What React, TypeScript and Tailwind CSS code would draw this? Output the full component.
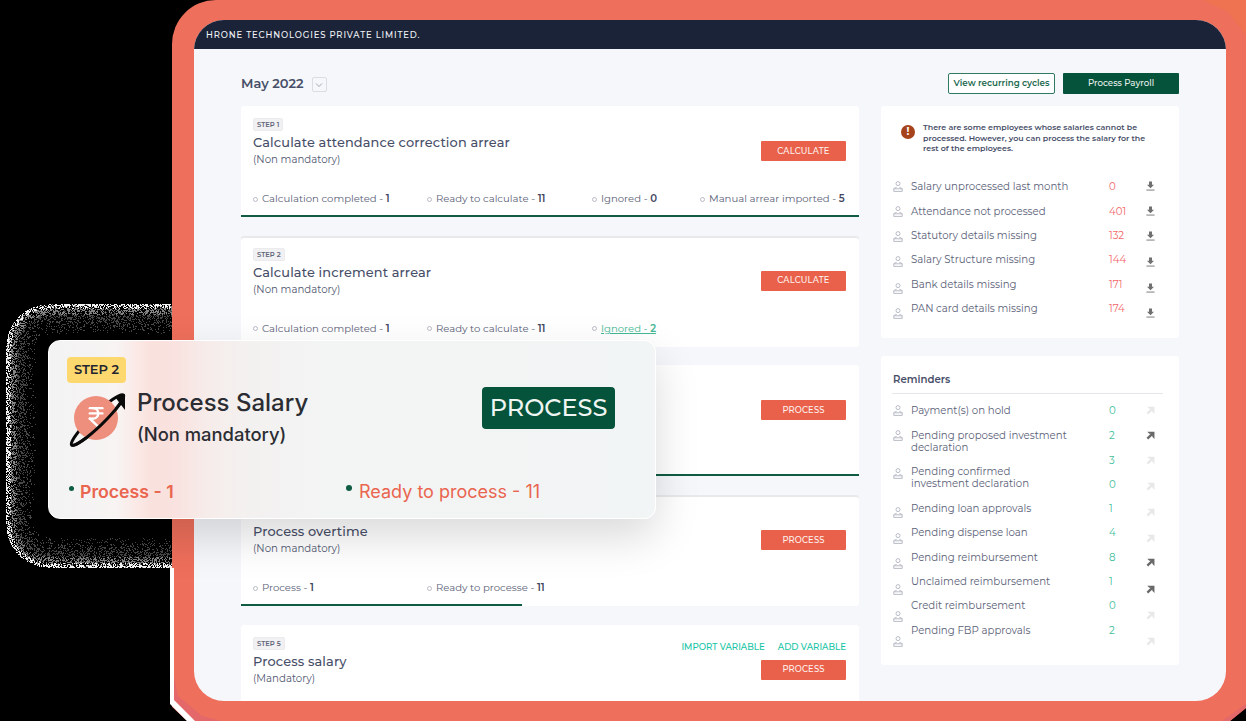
import React, { useMemo } from "react";

const MONT = "font-['Montserrat','Inter','Noto_Sans',sans-serif]";

function Person() {
  return (
    <svg width="10" height="11" viewBox="0 0 10 11" fill="none" stroke="#b0b3c0" strokeWidth="0.9" className="shrink-0">
      <circle cx="5" cy="2.6" r="2" />
      <path d="M0.8 7.8h8.4v2.6H0.8z" strokeLinejoin="round" />
      <path d="M0.8 7.8c.8-1.1 2-1.3 2.8-1.4M9.2 7.8c-.8-1.1-2-1.3-2.8-1.4" />
    </svg>
  );
}

function Download() {
  return (
    <svg width="9" height="10" viewBox="0 0 9 10" fill="#707070">
      <path d="M3 0.5h3v3.2h2L4.5 7.3 1 3.7h2z" />
      <rect x="0.4" y="8.6" width="8.2" height="0.9" />
    </svg>
  );
}

function Arrow({ on }: { on: boolean }) {
  return (
    <svg width="9" height="9" viewBox="0 0 10 10" fill={on ? "#686868" : "#e8e8e8"}>
      <path d="M1.4 0.8h8v8L7 6.4V4.9L2.4 9.4 0.6 7.6l4.6-4.5H3.7z" />
    </svg>
  );
}

function Stat({ text, n, className }: { text: string; n: string; className: string }) {
  return (
    <div className={`flex items-center gap-[4px] ${className}`}>
      <span className="w-[5px] h-[5px] rounded-full border border-[#b9bcc6] shrink-0" />
      <span className="whitespace-nowrap">
        {text} - <b className="font-semibold text-[#3f465f]">{n}</b>
      </span>
    </div>
  );
}

function Card({
  step,
  title,
  sub,
  btn,
  stats,
  bar,
  extra,
  topBorder,
}: {
  step?: string;
  title?: string;
  sub?: string;
  btn: string;
  stats?: React.ReactNode;
  bar?: string;
  extra?: boolean;
  topBorder?: boolean;
}) {
  return (
    <div className={`relative bg-white rounded-[3px] h-[111px] shrink-0 pl-[12px] pr-[13px] pt-[12px] ${topBorder ? "shadow-[inset_0_2px_0_#e9e9ec]" : ""}`}>
      <div className="flex justify-between">
        <div className="flex flex-col">
          <div className="h-[13px] flex">
            {step && (
              <span className="px-[3px] bg-[#f1f1f3] border border-[#ebebed] rounded-[2px] text-[6.8px] leading-[11px] font-semibold text-[#5f6478]">
                {step}
              </span>
            )}
          </div>
          {title && <div className="mt-[4px] text-[12.9px] leading-[16px] font-medium text-[#474e68] tracking-[0.01em]">{title}</div>}
          {sub && <div className="mt-[2px] text-[10.2px] leading-[14px] text-[#515771]">{sub}</div>}
        </div>
        <div className="flex flex-col items-end">
          {extra ? (
            <div className="flex gap-[13px] mt-[4px] mb-[7px] text-[8.7px] leading-[12px] font-medium text-[#13c4a3]">
              <span>IMPORT VARIABLE</span>
              <span>ADD VARIABLE</span>
            </div>
          ) : (
            <div className="h-[23px]" />
          )}
          <div className="w-[85px] h-[20px] bg-[#e9614a] rounded-[1px] flex items-center justify-center text-[8.4px] font-medium text-[#fdf3f0] tracking-[0.02em]">
            {btn}
          </div>
        </div>
      </div>
      {stats}
      {bar && <div className={`absolute left-0 bottom-0 h-[2px] bg-[#0f5c43] ${bar}`} />}
    </div>
  );
}

const ROW = "absolute top-[86px] text-[10.1px] leading-[14px] text-[#5b6178]";

function Halo() {
  const paths = useMemo(() => {
    let s = 20220517;
    const rnd = () => {
      s = (s * 1664525 + 1013904223) >>> 0;
      return s / 4294967296;
    };
    const X0 = 6, Y0 = 304, Y1 = 568, R = 42;
    const hard: string[] = [];
    const mid: string[] = [];
    const low: string[] = [];
    for (let y = Y0; y < Y1; y++) {
      for (let x = X0; x < 172; x++) {
        const qx = Math.max(X0 + R - x, 0);
        const qy = Math.max(Y0 + R - y, y > Y1 - R - 1 ? y - (Y1 - R - 1) : 0);
        let d: number;
        if (qx > 0 && qy > 0) d = R - Math.hypot(qx, qy);
        else d = Math.min(x - X0, y - Y0, Y1 - 1 - y);
        if (d < 0) continue;
        const p = `M${x} ${y}h1v1h-1z`;
        const r = rnd();
        if (d < 5 && r < 0.66 - d * 0.09) hard.push(p);
        else if (d < 11 && r < 0.7 - d * 0.04) mid.push(p);
        else if (d < 30 && r < 0.66 - d * 0.021) low.push(p);
      }
    }
    return [hard.join(""), mid.join(""), low.join("")];
  }, []);
  return (
    <svg width="172" height="721" viewBox="0 0 172 721" className="absolute left-0 top-0">
      <path d={paths[2]} fill="#484848" />
      <path d={paths[1]} fill="#858585" />
      <path d={paths[0]} fill="#f5f5f5" />
    </svg>
  );
}

const DETAILS: [string, string, number, number][] = [
  ["Salary unprocessed last month", "0", 186, 186],
  ["Attendance not processed", "401", 211, 211],
  ["Statutory details missing", "132", 236.5, 236],
  ["Salary Structure missing", "144", 261.5, 261.5],
  ["Bank details missing", "171", 288, 287.5],
  ["PAN card details missing", "174", 313, 312.5],
];

const REM_TEXT: [string, number][] = [
  ["Payment(s) on hold", 410],
  ["Pending proposed investment declaration", 441],
  ["Pending confirmed investment declaration", 477],
  ["Pending loan approvals", 508],
  ["Pending dispense loan", 532],
  ["Pending reimbursement", 556.5],
  ["Unclaimed reimbursement", 581],
  ["Credit reimbursement", 605],
  ["Pending FBP approvals", 630],
];
const REM_PERSON = [410, 435, 473, 512, 538, 563, 589, 616, 641];
const REM_NUM: [string, number][] = [
  ["0", 410], ["2", 435], ["3", 459.5], ["0", 483.5], ["1", 508],
  ["4", 532], ["8", 556.5], ["1", 581], ["0", 605], ["2", 630],
];
const REM_ARROW = [410, 435.5, 460.5, 486.5, 512, 538, 562.5, 589, 615, 641.5];

export default function App() {
  return (
    <div className={`relative w-[1246px] h-[721px] overflow-hidden bg-black ${MONT}`}>
      <Halo />
      {/* coral frame */}
      <div className="absolute left-[172px] top-0 right-0 h-[721px] bg-[#ee6f5b] rounded-tl-[44px] pl-[22px] pr-[20px] pt-[20px] pb-[20px]">
        <div className="h-full rounded-[30px] overflow-hidden bg-[#f5f7fb] flex flex-col">
          <div className="h-[29px] shrink-0 bg-[#1b2339] pl-[12px] pt-[1px] flex items-center text-[8.5px] font-medium tracking-[0.1em] text-[#f2f3f6]">
            HRONE TECHNOLOGIES PRIVATE LIMITED.
          </div>
          <div className="flex gap-[22px] pl-[47px] pr-[47px] pt-[24px] overflow-hidden flex-1">
            {/* left column */}
            <div className="w-[618px] shrink-0 flex flex-col">
              <div className="h-[33px] shrink-0 flex items-start">
                <span className="text-[13px] leading-[20px] font-semibold text-[#474e68]">May 2022</span>
                <span className="ml-[8px] mt-[4px] w-[15px] h-[15px] border border-[#dcdde2] rounded-[2px] flex items-center justify-center">
                  <svg width="8" height="8" viewBox="0 0 8 8" fill="none" stroke="#8c90a0" strokeWidth="0.8">
                    <path d="M1 2.5l3 3 3-3" />
                  </svg>
                </span>
              </div>
              <div className="flex flex-col gap-[18.7px]">
                <Card
                  step="STEP 1"
                  title="Calculate attendance correction arrear"
                  sub="(Non mandatory)"
                  btn="CALCULATE"
                  bar="w-full"
                  stats={
                    <>
                      <Stat className={`${ROW} left-[12px]`} text="Calculation completed" n="1" />
                      <Stat className={`${ROW} left-[186px]`} text="Ready to calculate" n="11" />
                      <Stat className={`${ROW} left-[351px]`} text="Ignored" n="0" />
                      <Stat className={`${ROW} left-[459px]`} text="Manual arrear imported" n="5" />
                    </>
                  }
                />
                <Card
                  topBorder
                  step="STEP 2"
                  title="Calculate increment arrear"
                  sub="(Non mandatory)"
                  btn="CALCULATE"
                  stats={
                    <>
                      <Stat className={`${ROW} left-[12px]`} text="Calculation completed" n="1" />
                      <Stat className={`${ROW} left-[186px]`} text="Ready to calculate" n="11" />
                      <div className={`${ROW} left-[351px] flex items-center gap-[4px]`}>
                        <span className="w-[5px] h-[5px] rounded-full border border-[#b9bcc6]" />
                        <span className="underline text-[#45b795] whitespace-nowrap">
                          Ignored - <b className="font-semibold">2</b>
                        </span>
                      </div>
                    </>
                  }
                />
                <Card btn="PROCESS" bar="w-full" />
                <Card
                  topBorder
                  title="Process overtime"
                  sub="(Non mandatory)"
                  btn="PROCESS"
                  bar="w-[281px]"
                  stats={
                    <>
                      <Stat className={`${ROW} left-[12px]`} text="Process" n="1" />
                      <Stat className={`${ROW} left-[186px]`} text="Ready to processe" n="11" />
                    </>
                  }
                />
                <Card extra step="STEP 5" title="Process salary" sub="(Mandatory)" btn="PROCESS" />
              </div>
            </div>
            {/* right column */}
            <div className="w-[298px] shrink-0 flex flex-col">
              <div className="h-[33px] shrink-0 flex justify-end items-start gap-[8px]">
                <span className="w-[107px] h-[21px] border border-[#2f7a61] rounded-[2px] bg-white flex items-center justify-center text-[8.7px] font-semibold text-[#1d6a50]">
                  View recurring cycles
                </span>
                <span className="w-[116px] h-[21px] bg-[#05533a] rounded-[1px] flex items-center justify-center text-[8.7px] font-medium text-[#e9f1ee]">
                  Process Payroll
                </span>
              </div>
              <div className="bg-white rounded-[3px] h-[232px] shrink-0 pl-[11px] pt-[16px]">
                <div className="flex pl-[9px] gap-[8px]">
                  <span className="w-[14px] h-[14px] mt-[3px] rounded-full bg-[#a6431d] text-white text-[10px] leading-[14px] font-bold text-center shrink-0">
                    !
                  </span>
                  <p className="w-[238px] text-[7.9px] leading-[10.7px] font-semibold text-[#474e68]">
                    There are some employees whose salaries cannot be processed. However, you can process the salary for the rest of the employees.
                  </p>
                </div>
                <div className="mt-[26px] flex flex-col gap-[10.4px]">
                  {DETAILS.map(([t, n, pc, dc], i) => {
                    const rowC = 187 + 24.4 * i;
                    return (
                      <div key={i} className="relative h-[14px] pl-[19px] flex items-center text-[10.2px] leading-[14px] text-[#5b6178]">
                        <span className="absolute left-[1px]" style={{ top: pc - rowC + 1.5 }}>
                          <Person />
                        </span>
                        <span className="whitespace-nowrap">{t}</span>
                        <span className="absolute left-[217px] text-[#f2686a]">{n}</span>
                        <span className="absolute left-[254px]" style={{ top: dc - rowC + 2 }}>
                          <Download />
                        </span>
                      </div>
                    );
                  })}
                </div>
              </div>
              <div className="mt-[18px] bg-white rounded-[3px] h-[309px] shrink-0 pl-[11px] pt-[17px] text-[10.2px] leading-[12px] text-[#5b6178]">
                <div className="text-[10.2px] leading-[14px] font-semibold text-[#474e68] pl-[1px] pb-[6px] border-b border-[#e6e6ea] w-[271px]">Reminders</div>
                <div className="relative h-[270px]">
                  {REM_TEXT.map(([t, c], i) => (
                    <span key={i} className="absolute left-[19px] w-[158px]" style={{ top: c - 393 - (t.length > 30 ? 12 : 6) }}>
                      {t}
                    </span>
                  ))}
                  {REM_PERSON.map((c, i) => (
                    <span key={i} className="absolute left-[1px]" style={{ top: c - 393 - 6 }}>
                      <Person />
                    </span>
                  ))}
                  {REM_NUM.map(([n, c], i) => (
                    <span key={i} className="absolute left-[217px] text-[#3fc09c]" style={{ top: c - 393 - 6 }}>
                      {n}
                    </span>
                  ))}
                  {REM_ARROW.map((c, i) => (
                    <span key={i} className="absolute left-[254px]" style={{ top: c - 393 - 5.5 }}>
                      <Arrow on={i === 1 || i === 6 || i === 7} />
                    </span>
                  ))}
                </div>
              </div>
            </div>
          </div>
        </div>
      </div>

      {/* outer corners of the frame artwork */}
      <svg width="1246" height="721" viewBox="0 0 1246 721" className="absolute left-0 top-0 pointer-events-none">
        <polygon points="1203,0 1246,0 1246,35 1228,12" fill="#ef7350" />
        <polygon points="1246,708 1246,721 1230,721" fill="#000" />
        <polygon points="1246,704 1246,708 1230,721 1222,721" fill="#e2686a" />
        <polygon points="168,703 187,721 168,721" fill="#000" />
        <polygon points="174,676 178,696 202,716 222,721 194,721 174,700" fill="#e4686a" />
        <polygon points="170,568 174,568 174,700 195,721 187,721 170,704" fill="#fff" />
      </svg>

      {/* floating card */}
      <div className="absolute left-[48px] top-[340px] w-[608px] h-[179px] rounded-[12px] overflow-hidden shadow-[0_18px_44px_rgba(0,0,0,0.15)] border border-white bg-[linear-gradient(90deg,#f3f3f3_0%,#f7f4f3_11%,#fbe9e6_14.5%,#f9e1dd_17%,#f9e2df_21%,#f6ecea_26%,#f3f1f0_33%,#f3f4f4_45%,#f2f5f5_100%)] font-['Inter','Noto_Sans',sans-serif]">
        <div className="absolute left-[18px] top-[16px] w-[59px] h-[26px] rounded-[4px] bg-[#fdd86e] flex items-center justify-center text-[13px] font-semibold text-[#1f2430] font-['Montserrat','Inter',sans-serif]">
          STEP 2
        </div>
        <svg width="64" height="64" viewBox="0 0 64 64" className="absolute left-[19px] top-[49px]">
          <g transform="rotate(-44 29.5 30)">
            <ellipse cx="29.5" cy="30" rx="36" ry="6" fill="none" stroke="#0a0a0a" strokeWidth="3" />
          </g>
          <circle cx="28" cy="28" r="22" fill="#ee8f7d" />
          <g transform="translate(15.5,15) scale(1.05)" fill="none" stroke="#fff" strokeWidth="2.3" strokeLinecap="round" strokeLinejoin="round">
            <path d="M6 3h12" />
            <path d="M6 8h12" />
            <path d="m6 13 8.5 8" />
            <path d="M6 13h3" />
            <path d="M9 13c6.667 0 6.667-10 0-10" />
          </g>
          <g transform="rotate(-44 29.5 30)">
            <path d="M-6.5 30A36 6 0 0 0 65.5 30" fill="none" stroke="#0a0a0a" strokeWidth="3" />
          </g>
          <polygon points="47,7 57,5 57,20" fill="#0a0a0a" />
        </svg>
        <div className="absolute left-[88px] top-[46px] text-[24px] leading-[32px] font-medium text-[#2b2d33] whitespace-nowrap">Process Salary</div>
        <div className="absolute left-[88px] top-[81px] text-[18.4px] leading-[24px] text-[#2b2d33] font-medium whitespace-nowrap">(Non mandatory)</div>
        <div className="absolute left-[433px] top-[46px] w-[133px] h-[42px] rounded-[4px] bg-[#05533a] flex items-center justify-center text-[24px] font-medium text-[#eef5f2] font-['Montserrat','Inter',sans-serif]">
          PROCESS
        </div>
        <span className="absolute left-[20px] top-[145px] w-[5px] h-[5px] rounded-full bg-[#0d5c43]" />
        <div className="absolute left-[31px] top-[138px] text-[17.7px] leading-[26px] font-semibold text-[#ea654f] whitespace-nowrap">Process - 1</div>
        <span className="absolute left-[297px] top-[144px] w-[6px] h-[6px] rounded-full bg-[#0d5c43]" />
        <div className="absolute left-[310px] top-[138px] text-[18px] leading-[26px] font-normal text-[#ea654f] whitespace-nowrap">Ready to process - 11</div>
      </div>
    </div>
  );
}
